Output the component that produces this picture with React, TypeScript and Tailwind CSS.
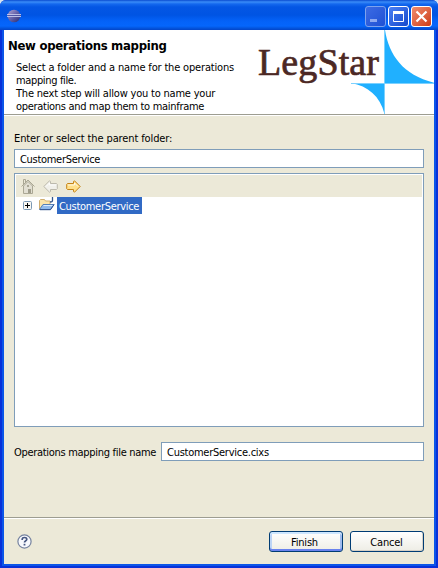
import type { ReactNode } from "react";

function EclipseIcon() {
  return (
    <svg width="14" height="14" viewBox="0 0 14 14">
      <defs>
        <linearGradient id="orb" x1="0" y1="0" x2="1" y2="1">
          <stop offset="0" stopColor="#b3a4d0" />
          <stop offset=".45" stopColor="#6a67ae" />
          <stop offset="1" stopColor="#272a70" />
        </linearGradient>
      </defs>
      <circle cx="7" cy="7" r="6.3" fill="url(#orb)" />
      <path d="M0 5.500h14M0 7.500h14" stroke="#c5c8ec" strokeWidth=".9" />
      <path d="M1 6.500h13" stroke="#4d52a4" strokeWidth=".9" />
    </svg>
  );
}

function CaptionButton({ tone, children }: { tone: string; children: ReactNode }) {
  return (
    <div className={`h-[21px] w-[21px] rounded-[3px] border ${tone}`}>
      <svg width="19" height="19" viewBox="0 0 19 19" className="block">
        {children}
      </svg>
    </div>
  );
}

function TitleBar() {
  return (
    <div className="flex h-[30px] shrink-0 items-start rounded-t-[6px] bg-[linear-gradient(180deg,#0a4bd0_0px,#3a8cf8_2px,#1468ee_4px,#0456e4_7px,#0054e3_15px,#0462f8_21px,#0566fc_26px,#0356e0_28px,#0345c8_30px)] pt-[6px] pr-[6px] pl-[7px]">
      <div className="pt-[3px]">
        <EclipseIcon />
      </div>
      <div className="ml-auto flex gap-[2px]">
        <CaptionButton tone="border-[#7da2ee] bg-linear-to-br from-[#3c6be4] to-[#1f50d4]">
          <rect x="4" y="12" width="7" height="3" fill="#8ea9f0" />
        </CaptionButton>
        <CaptionButton tone="border-white bg-linear-to-br from-[#4b80f4] to-[#1548cc]">
          <path d="M4.5 4v10.500h10V4" fill="none" stroke="#fff" />
          <rect x="4" y="4" width="11" height="3" fill="#fff" />
        </CaptionButton>
        <CaptionButton tone="border-white bg-linear-to-br from-[#f08b6c] to-[#cc3a10]">
          <path d="M4.5 4.500l10 10m0-10l-10 10" stroke="#fff" strokeWidth="2.2" />
        </CaptionButton>
      </div>
    </div>
  );
}

function Logo() {
  return (
    <svg width="178" height="84" viewBox="0 0 178 84" className="absolute top-0 right-0">
      <text
        x="2"
        y="45"
        fontFamily="'Liberation Serif', serif"
        fontSize="38"
        fill="#4c2824"
        stroke="#4c2824"
        strokeWidth=".7"
        textLength="121"
      >
        LegStar
      </text>
      <path
        d="M129 0C133 25 147 45 178 52.700V54H129V84H128.500C124 66 112 56 95 53H128V0Z"
        fill="#20b0ff"
      />
      <path d="M128.500 0v84M95 53.500h83" stroke="#7bd1ff" />
    </svg>
  );
}

function Header() {
  return (
    <div className="relative h-[86px] shrink-0 border-b border-white bg-white">
      <div className="h-[85px] border-b border-[#9d9d91] pt-[8px] pl-[4px]">
        <div className="text-[13px] leading-[16px] font-bold tracking-[-0.3px]">New operations mapping</div>
        <div className="pt-[7px] pl-[8px] leading-[13px] whitespace-nowrap">
          <div className="tracking-[-0.17px]">Select a folder and a name for the operations</div>
          <div className="tracking-[-0.35px]">mapping file.</div>
          <div className="tracking-[-0.2px]">The next step will allow you to name your</div>
          <div className="tracking-[-0.3px]">operations and map them to mainframe</div>
        </div>
      </div>
      <Logo />
    </div>
  );
}

function HomeIcon() {
  return (
    <svg width="14" height="16" viewBox="0 0 14 16">
      <path d="M2.500 8v7.500h9V8L7 3.500z" fill="#e2dfd2" stroke="#aaa794" />
      <path d="M.5 8.500L7 2l6.500 6.500M2.500 6V1.500h2V4" fill="none" stroke="#aaa794" />
      <path d="M7 11h3v4H7z" fill="#9f9c8a" />
      <path d="M6 7h2v2H6z" fill="#aaa794" />
    </svg>
  );
}

function Arrow({ fill, stroke, flip }: { fill: string; stroke: string; flip?: boolean }) {
  return (
    <svg width="15" height="13" viewBox="0 0 15 13" className={flip ? "-scale-x-100" : ""}>
      <path d="M1.500 3.500H7.500V1.500L8.500.8L14.200 6.500L8.500 12.200L7.500 11.500V9.500H1.500L.7 8.700V4.300z" fill={fill} stroke={stroke} strokeLinejoin="round" />
      <path d="M2 5h6.500V3L12 6.500" fill="none" stroke="#fff" strokeOpacity=".75" />
    </svg>
  );
}

function FolderIcon() {
  return (
    <svg width="17" height="15" viewBox="0 0 17 15">
      <path d="M1.500 12.500V3.500l1-1h4l1 1.500h4.500V8" fill="#fbe4aa" stroke="#d0ae70" />
      <path d="M1.500 12.500L5 7.500h11L12.500 12.500z" fill="#8fb9ec" stroke="#5580b8" />
      <path d="M2 12.700h10.500L16 7.500" fill="none" stroke="#2f518c" />
      <path d="M5.500 8.500h9" stroke="#d8eaff" />
      <path d="M14.500 0v3.500q0 1.500-2.500 1.500" fill="none" stroke="#33568c" strokeWidth="1.300" />
    </svg>
  );
}

function TreePanel() {
  return (
    <div className="mt-[5px] h-[254px] border border-[#7f9db9] bg-white p-px">
      <div className="flex h-[22px] items-center bg-[#ece9d8] pl-[5px]">
        <HomeIcon />
        <div className="ml-[8px]">
          <Arrow fill="#f1f0ea" stroke="#bcb9ac" flip />
        </div>
        <div className="ml-[8px]">
          <Arrow fill="#ffe08a" stroke="#c48318" />
        </div>
      </div>
      <div className="flex h-[17px] items-center pl-[7px]">
        <svg width="9" height="9" viewBox="0 0 9 9">
          <rect x=".5" y=".5" width="8" height="8" rx="1" fill="#f8f7f2" stroke="#7b98b5" />
          <path d="M2 4.500h5M4.500 2v5" stroke="#000" />
        </svg>
        <div className="ml-[6px] self-start">
          <FolderIcon />
        </div>
        <div className="ml-[2px] h-[17px] w-[85px] bg-[#316ac5] pl-[2px] leading-[19px] tracking-[-0.3px] text-white">CustomerService</div>
      </div>
    </div>
  );
}

function HelpIcon() {
  return (
    <svg width="15" height="15" viewBox="0 0 15 15">
      <circle cx="7.500" cy="7.500" r="6.600" fill="#f7f8fc" stroke="#76839f" strokeWidth="1.200" />
      <path d="M5.200 6V5.200q.2-1.700 2.300-1.700t2.300 1.700q0 1-1.300 1.800-1 .6-1 1.600" fill="none" stroke="#465782" strokeWidth="1.700" />
      <rect x="6.600" y="9.800" width="1.800" height="1.700" fill="#465782" />
    </svg>
  );
}

export default function App() {
  return (
    <div className="h-[568px] w-[438px] overflow-hidden bg-[#d8e4f0] font-['DejaVu_Sans_Condensed','DejaVu_Sans',sans-serif] text-[11px] text-black">
      <div className="flex h-[568px] flex-col rounded-t-[6px] bg-[#0831d9]">
        <TitleBar />
        <div className="mx-[2px] mb-[2px] flex flex-1 flex-col border-x-2 border-b-2 border-[#0b55e8] bg-[#ece9d8]">
          <Header />
          <div className="flex-1 px-[10px] pt-[15px]">
            <div className="leading-[16px] tracking-[-0.12px]">Enter or select the parent folder:</div>
            <div className="mt-[2px] h-[19px] border border-[#7f9db9] bg-white pl-[5px] leading-[19px] tracking-[-0.3px]">CustomerService</div>
            <TreePanel />
            <div className="mt-[15px] flex">
              <div className="h-[19px] w-[147px] leading-[21px] tracking-[-0.3px] whitespace-nowrap">Operations mapping file name</div>
              <div className="h-[19px] flex-1 border border-[#7f9db9] bg-white pl-[5px] leading-[19px] tracking-[-0.26px]">CustomerService.cixs</div>
            </div>
          </div>
          <div className="flex h-[47px] items-start border-t border-[#9d9d91] pt-px shadow-[inset_0_1px_0_#fff]">
            <div className="mt-[15px] ml-[13px]">
              <HelpIcon />
            </div>
            <div className="mt-[12px] mr-[10px] ml-auto flex gap-[7px] text-center leading-[21px] tracking-[-0.2px]">
              <div className="h-[21px] w-[74px] rounded-[3px] border border-[#003c74] bg-linear-to-b from-white to-[#eeede5] pr-[3px] shadow-[inset_0_2px_0_#cee7ff,inset_0_-2px_0_#6982ee,inset_2px_0_0_#bcd4f6,inset_-2px_0_0_#a0bcee]">Finish</div>
              <div className="h-[21px] w-[74px] rounded-[3px] border border-[#003c74] bg-linear-to-b from-white to-[#eeede5] pr-px shadow-[inset_-1px_-1px_0_#d6d0c5]">Cancel</div>
            </div>
          </div>
        </div>
      </div>
    </div>
  );
}
